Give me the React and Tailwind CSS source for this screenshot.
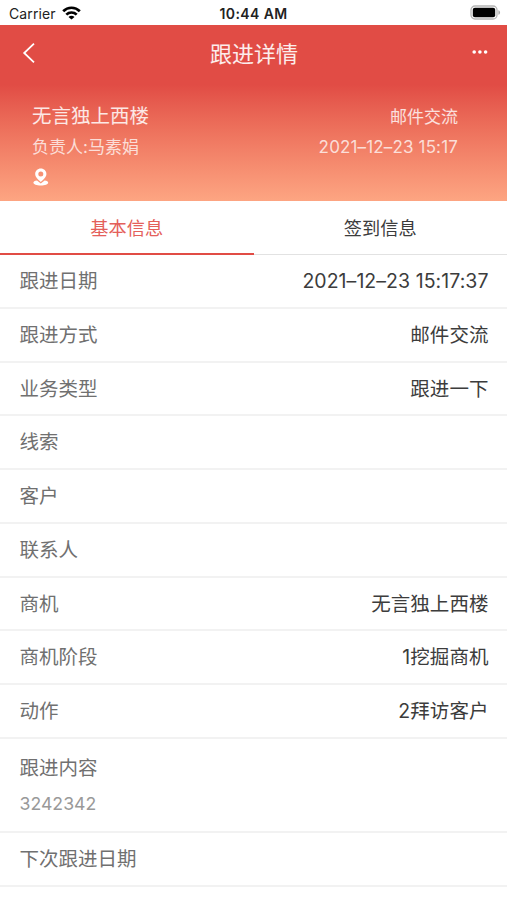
import React, { useState } from 'react';

const rows = [
  { label: '跟进日期', value: '2021–12–23 15:17:37' },
  { label: '跟进方式', value: '邮件交流' },
  { label: '业务类型', value: '跟进一下' },
  { label: '线索', value: '' },
  { label: '客户', value: '' },
  { label: '联系人', value: '' },
  { label: '商机', value: '无言独上西楼' },
  { label: '商机阶段', value: '1挖掘商机' },
  { label: '动作', value: '2拜访客户' },
];

const tabs = ['基本信息', '签到信息'];

const StatusBar = () => (
  <div className="grid h-[25px] grid-cols-3 items-center bg-white pt-[2px] text-[14px] leading-none text-[#222]">
    <div className="flex items-center gap-[6px] pl-[9px]">
      <span className="tracking-[0.1px]">Carrier</span>
      <svg width="19" height="14" viewBox="0 0 19 14" className="-mt-[2px]">
        <g fill="none" stroke="#000" strokeWidth="2.7">
          <path d="M1.2 5.2C5.8 0.6 13.2 0.6 17.8 5.2" />
          <path d="M4.3 8.6C7.2 5.8 11.8 5.8 14.7 8.6" />
        </g>
        <path d="M9.5 13.6L6.5 10.9C8.2 9.4 10.8 9.4 12.5 10.9Z" fill="#000" />
      </svg>
    </div>
    <div className="text-center font-semibold tracking-[0.4px]">10:44 AM</div>
    <div className="flex justify-end pr-[6px]">
      <svg width="31" height="15" viewBox="0 0 31 15" className="-mt-[2px]">
        <rect x="1" y="1" width="26" height="13" rx="4" fill="#fff" stroke="#b5b5b5" strokeWidth="1.3" />
        <rect x="2.8" y="2.8" width="22.4" height="9.4" rx="2" fill="#000" />
        <path d="M28.4 5.2C30.6 5.8 30.6 9.2 28.4 9.8Z" fill="#aaa" />
      </svg>
    </div>
  </div>
);

const Header = () => (
  <div className="h-[176px] bg-linear-to-b from-[#e14c45] from-34% to-[#fda582] text-white">
    <div className="flex h-[56px] items-center justify-between pr-[19px] pl-[22px]">
      <svg width="14" height="22" viewBox="0 0 14 22" fill="none" stroke="#fff" strokeWidth="1.8">
        <path d="M12 1.6L2.2 11L12 20.4" />
      </svg>
      <h1 className="pt-[2px] text-[22px] leading-none text-white/90">跟进详情</h1>
      <svg width="16" height="4" viewBox="0 0 16 4" fill="#fff" className="-mt-[3px]">
        <circle cx="2.2" cy="2" r="1.8" />
        <circle cx="7.9" cy="2" r="1.8" />
        <circle cx="13.6" cy="2" r="1.8" />
      </svg>
    </div>
    <div className="flex justify-between pt-[21px] pr-[49px] pl-[32px]">
      <div>
        <div className="text-[19.5px] leading-[28px] text-white/85">无言独上西楼</div>
        <div className="mt-[3px] text-[17px] leading-[28px] text-white/75">负责人:马素娟</div>
        <svg width="18" height="19" viewBox="0 0 18 19" className="mt-[7px]">
          <path d="M5 12.6C2.6 12.9 1.4 13.7 1.4 14.7C1.4 16.3 4.6 17.4 8.8 17.4S16.2 16.3 16.2 14.7C16.2 13.7 15 12.9 12.6 12.6L8.8 15.6Z" fill="#fff" />
          <path d="M8.8 0.5C5.6 0.5 3.2 2.9 3.2 6C3.2 9.3 6.2 11.6 8.8 14C11.4 11.6 14.4 9.3 14.4 6C14.4 2.9 12 0.5 8.8 0.5ZM8.8 3.6A2.5 2.5 0 1 1 8.8 8.6A2.5 2.5 0 1 1 8.8 3.6Z" fill="#fff" fillRule="evenodd" />
        </svg>
      </div>
      <div className="pt-px text-right text-[17px] leading-[28px]">
        <div className="text-white/80">邮件交流</div>
        <div className="mt-[2px] tracking-[0.15px] text-white/75">2021–12–23 15:17</div>
      </div>
    </div>
  </div>
);

const Row = ({ label, value }) => (
  <div className="flex h-[53.75px] items-center justify-between border-b-2 border-[#f2f2f2] pt-[2px] pr-[18.5px] pl-[19.5px] text-[19.5px] leading-none">
    <span className="text-[#707070]">{label}</span>
    <span className="tracking-[0.05px] text-[#3c3c3c]">{value}</span>
  </div>
);

const App = () => {
  const [active, setActive] = useState(0);

  return (
    <div className="h-[900px] w-[507px] overflow-hidden bg-white font-['Inter','Noto_Sans_CJK_SC',sans-serif]">
      <StatusBar />
      <Header />
      <div className="flex h-[54px]">
        {tabs.map((tab, i) => (
          <button
            key={tab}
            onClick={() => setActive(i)}
            className={
              i === active
                ? 'flex-1 border-b-2 border-[#e14c45] pt-[3px] text-[18.2px] text-[#e4605a]'
                : 'flex-1 border-b border-[#e2e2e2] pt-[2px] text-[18.2px] text-[#3c3c3c]'
            }
          >
            {tab}
          </button>
        ))}
      </div>
      {rows.map((row) => (
        <Row key={row.label} label={row.label} value={row.value} />
      ))}
      <div className="h-[94.25px] border-b-2 border-[#f2f2f2] pt-[15px] pl-[19.5px]">
        <div className="text-[19.5px] leading-[28px] text-[#707070]">跟进内容</div>
        <div className="mt-[8px] text-[17.7px] leading-[28px] text-[#999]">3242342</div>
      </div>
      <Row label="下次跟进日期" value="" />
    </div>
  );
};

export default App;
